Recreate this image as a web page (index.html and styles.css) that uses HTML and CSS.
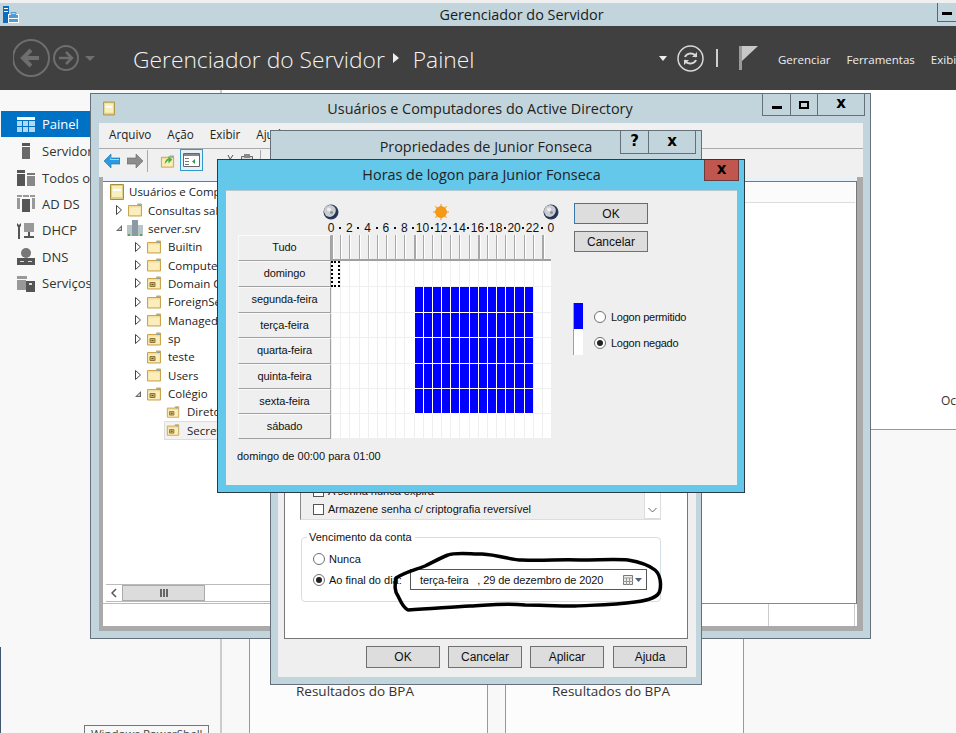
FILE: index.html
```html
<!DOCTYPE html>
<html lang="pt-BR">
<head>
<meta charset="utf-8">
<title>Gerenciador do Servidor</title>
<link rel="stylesheet" href="styles.css">
</head>
<body>
<svg class="defs" width="0" height="0" aria-hidden="true">
  <symbol id="folder" viewBox="0 0 16 16">
    <path d="M1.500 3.500h9v-1.500h4v12h-13z" fill="#f4dc9c" stroke="#c9a552"/>
    <path d="M2.500 5.500h11v7.500h-11z" fill="#fbeebd"/>
    <path d="M11 2.500h3v1.500h-3z" fill="#6aa3d8"/>
  </symbol>
  <symbol id="ou" viewBox="0 0 16 16">
    <path d="M1.500 3.500h9v-1.500h4v12h-13z" fill="#f4dc9c" stroke="#c9a552"/>
    <path d="M2.500 5.500h11v7.500h-11z" fill="#fbeebd"/>
    <path d="M11 2.500h3v1.500h-3z" fill="#6aa3d8"/>
    <path d="M4 7.500h5v4h-5z" fill="#cdb36b" stroke="#8a7436"/>
    <path d="M5.500 9h2v1h-2z" fill="#5a4a20"/>
  </symbol>
  <symbol id="book" viewBox="0 0 14 16">
    <path d="M.5.500h13v15h-13z" fill="#e2d089" stroke="#a98d3b"/>
    <path d="M2 2h10v11h-10z" fill="#f7efc0"/>
    <path d="M3 5h8v2h-8z" fill="#fff"/>
  </symbol>
  <symbol id="moon" viewBox="0 0 16 16">
    <circle cx="8" cy="8" r="7.500" fill="#2b3a55"/>
    <circle cx="7" cy="7" r="6" fill="#c9ccd0"/>
    <path d="M12.500 4a7 7 0 0 1-8.500 9a7 7 0 0 0 10-3z" fill="#1f3263"/>
    <circle cx="6" cy="5.500" r="2" fill="#eef0f2"/>
    <circle cx="8.500" cy="8.500" r="1.500" fill="#8f9398"/>
  </symbol>
  <symbol id="expand" viewBox="0 0 8 10">
    <path d="M1.500 .5l5 4.500l-5 4.500z" fill="#fff" stroke="#444"/>
  </symbol>
  <symbol id="open" viewBox="0 0 8 8">
    <path d="M7 1v6h-6z" fill="#666"/><path d="M5.800 3.500v2.300h-2.300z" fill="#fff"/>
  </symbol>
</svg>

<div class="desktop">
  <div class="topstrip"></div>
  <div class="sm-title">
    <svg class="app-icon" width="16" height="17" viewBox="0 0 16 17">
      <path d="M0 0h6v17h-6z" fill="#0f6cbd"/>
      <path d="M1 2h4v1h-4zM1 5h4v1h-4z" fill="#fff"/>
      <path d="M5 8h11v9h-11z" fill="#fff"/>
      <path d="M6 9h9v7h-9z" fill="#4f9bd6"/>
      <path d="M8 6.500h5v2h-5z" fill="none" stroke="#4f9bd6"/>
      <path d="M6 12h9v1h-9z" fill="#fff"/>
    </svg>
    <span class="sm-title-text">Gerenciador do Servidor</span>
    <span class="sm-min"></span>
  </div>
  <header class="sm-head">
    <svg class="nav" width="86" height="40" viewBox="0 0 86 40">
      <g fill="none" stroke="#6e6e6e">
        <circle cx="18" cy="20" r="18" stroke-width="2"/>
        <circle cx="53" cy="20" r="12" stroke-width="2"/>
        <path d="M26 20h-15M18 12l-8 8l8 8" stroke-width="4"/>
        <path d="M46 20h13M53 14l6 6l-6 6" stroke-width="2.500"/>
      </g>
      <path d="M72 18h10l-5 5z" fill="#6e6e6e"/>
    </svg>
    <div class="crumb">
      <span>Gerenciador do Servidor</span>
      <svg class="crumb-sep" width="6" height="10" viewBox="0 0 6 10"><path d="M0 0l6 5l-6 5z" fill="#eee"/></svg>
      <span>Painel</span>
    </div>
    <div class="tools">
      <svg width="8" height="5" viewBox="0 0 8 5"><path d="M0 0h8l-4 5z" fill="#eee"/></svg>
      <svg class="refresh" width="27" height="27" viewBox="0 0 27 27" fill="none" stroke="#d8d8d8">
        <circle cx="13.500" cy="13.500" r="12.500" stroke-width="1.500"/>
        <path d="M8 12a6 5 0 0 1 10-2l1.500 2M19 15a6 5 0 0 1-10 2l-1.500-2" stroke-width="2"/>
        <path d="M20 7v5h-5zM7 20v-5h5z" fill="#d8d8d8" stroke="none"/>
      </svg>
      <span class="tools-sep"></span>
      <svg class="flag" width="19" height="24" viewBox="0 0 19 24"><path d="M0 0h3v24h-3z" fill="#9a9a9a"/><path d="M3 0h16l-16 15z" fill="#c8c8c8"/></svg>
    </div>
    <nav class="sm-menu"><span>Gerenciar</span><span>Ferramentas</span><span>Exibir</span><span>Ajuda</span></nav>
  </header>

  <main class="sm-main">
    <aside class="sidebar">
      <div class="side-item active">
        <svg class="side-icon" width="18" height="15" viewBox="0 0 18 15"><path d="M0 0h18v3h-18z" fill="#fff"/><path d="M0 4h5v5h-5zM6 4h5v5h-5zM12 4h6v5h-6zM0 10h5v5h-5zM6 10h5v5h-5zM12 10h6v5h-6z" fill="#b5d6ef"/></svg>
        <span>Painel</span>
      </div>
      <div class="side-item">
        <svg class="side-icon" width="18" height="16" viewBox="0 0 18 16"><path d="M5 0h8v3h-8z" fill="#555"/><path d="M5 4h8v12h-8z" fill="#6a6a6a"/></svg>
        <span>Servidor Local</span>
      </div>
      <div class="side-item">
        <svg class="side-icon" width="18" height="16" viewBox="0 0 18 16"><path d="M0 0h8v3h-8zM0 4h8v12h-8z" fill="#555"/><path d="M10 3h8v2h-8z" fill="#777"/><path d="M10 6h8v10h-8z" fill="#888"/></svg>
        <span>Todos os Servidores</span>
      </div>
      <div class="side-item">
        <svg class="side-icon" width="18" height="17" viewBox="0 0 18 17"><path d="M0 0h5v2h-5zM0 3h3v11h-3zM13 0h5v2h-5zM15 3h3v11h-3zM6 0h6v2h-6z" fill="#999"/><path d="M5 4h8v13h-8z" fill="#555"/></svg>
        <span>AD DS</span>
      </div>
      <div class="side-item">
        <svg class="side-icon" width="18" height="17" viewBox="0 0 18 17"><path d="M0 1l2 2l2-2v3l-1 1v12h-2v-12l-1-1z" fill="#555"/><path d="M7 1h10v9h-10z" fill="#999"/><path d="M11 10h2v4h4v2h-10v-2h4z" fill="#555"/></svg>
        <span>DHCP</span>
      </div>
      <div class="side-item">
        <svg class="side-icon" width="18" height="17" viewBox="0 0 18 17"><circle cx="9" cy="5" r="5" fill="#777"/><path d="M0 10h18v7h-18z" fill="#555"/><path d="M3 13h4v1h-4zM11 13h4v1h-4z" fill="#ddd"/></svg>
        <span>DNS</span>
      </div>
      <div class="side-item">
        <svg class="side-icon" width="18" height="17" viewBox="0 0 18 17"><path d="M0 1h10v3h-10z" fill="#999"/><path d="M0 5h9v10h-9z" fill="#999"/><path d="M9 6h9v11h-9z" fill="#555"/><path d="M12 8h3v2h-3z" fill="#ddd"/></svg>
        <span>Serviços de Arquivo</span>
      </div>
      <div class="tooltip">Windows PowerShell</div>
    </aside>
    <section class="content">
      <div class="content-top"><span class="oc">Ocultar</span></div>
      <div class="tiles">
        <div class="tile"><span>Resultados do BPA</span></div>
        <div class="tile"><span>Resultados do BPA</span></div>
      </div>
    </section>
  </main>

  <!-- Usuários e Computadores do Active Directory -->
  <div class="win ad">
    <div class="win-title">
      <svg class="win-icon" width="12" height="15"><use href="#book"/></svg>
      <span>Usuários e Computadores do Active Directory</span>
      <div class="caps">
        <span class="cap cap-min"><i class="glyph-min"></i></span>
        <span class="cap cap-max"><i class="glyph-max"></i></span>
        <span class="cap cap-x">x</span>
      </div>
    </div>
    <div class="ad-client">
      <div class="ad-menu"><span>Arquivo</span><span>Ação</span><span>Exibir</span><span>Ajuda</span></div>
      <div class="ad-toolbar">
        <svg class="tb" width="16" height="14" viewBox="0 0 16 14"><path d="M7 0v4h9v6h-9v4l-7-7z" fill="#2a9be0" stroke="#146ea8" stroke-width=".6"/><path d="M7 2v3h8v1h-9z" fill="#9cdcff"/></svg>
        <svg class="tb" width="16" height="14" viewBox="0 0 16 14"><path d="M9 0v4h-9v6h9v4l7-7z" fill="#8c8c8c" stroke="#666" stroke-width=".6"/></svg>
        <span class="tb-sep"></span>
        <svg class="tb tb-up" width="15" height="15" viewBox="0 0 16 16"><use href="#folder"/><path d="M5 11c0-4 2-6 4-6v-3l4 4l-4 4v-3c-1 0-2 2-4 4z" fill="#4fae3a"/></svg>
        <span class="tb-active">
          <svg width="17" height="14" viewBox="0 0 17 14"><path d="M.5.500h16v13h-16z" fill="#fff" stroke="#666"/><path d="M1 1h15v2h-15z" fill="#888"/><path d="M2 5h4v1h-4zM2 8h4v1h-4zM2 11h4v1h-4z" fill="#777"/><path d="M12 6v5l-3-2.500z" fill="#2f9e4f"/></svg>
        </span>
        <svg class="tb tb-cut" width="15" height="15" viewBox="0 0 15 15" fill="none" stroke="#555"><path d="M12 1l-6 9M7 1l3 6"/><circle cx="4" cy="12" r="2"/></svg>
        <svg class="tb tb-paste" width="12" height="15" viewBox="0 0 12 15"><path d="M.5 2.500h11v12h-11z" fill="#ddd" stroke="#666"/><path d="M3 0h6v4h-6z" fill="#888"/></svg>
        <span class="tb-sep tb-sep2"></span>
        <svg class="tb" width="10" height="12" viewBox="0 0 10 12"><circle cx="5" cy="6" r="4.500" fill="#d33"/></svg>
      </div>
      <div class="panes">
        <div class="split">
          <div class="tree-pane">
            <ul class="tree">
              <li class="root"><svg class="node" width="14" height="16"><use href="#book"/></svg><span>Usuários e Computadores do AD</span></li>
              <li class="d1"><svg class="exp" width="8" height="10"><use href="#expand"/></svg><svg class="node" width="16" height="16"><use href="#folder"/></svg><span>Consultas salvas</span></li>
              <li class="d1"><svg class="exp" width="8" height="8"><use href="#open"/></svg><svg class="node" width="16" height="16" viewBox="0 0 16 16"><path d="M5 0h6v16h-6z" fill="#8b9aa0"/><path d="M0 5h5v11h-5zM11 5h5v11h-5z" fill="#b8c4c8"/><path d="M1 14h2v2h-2zM13 14h2v2h-2z" fill="#3eb33e"/></svg><span>server.srv</span></li>
              <li class="d2"><svg class="exp" width="8" height="10"><use href="#expand"/></svg><svg class="node" width="16" height="16"><use href="#folder"/></svg><span>Builtin</span></li>
              <li class="d2"><svg class="exp" width="8" height="10"><use href="#expand"/></svg><svg class="node" width="16" height="16"><use href="#folder"/></svg><span>Computers</span></li>
              <li class="d2"><svg class="exp" width="8" height="10"><use href="#expand"/></svg><svg class="node" width="16" height="16"><use href="#ou"/></svg><span>Domain Controllers</span></li>
              <li class="d2"><svg class="exp" width="8" height="10"><use href="#expand"/></svg><svg class="node" width="16" height="16"><use href="#folder"/></svg><span>ForeignSecurityPrincipals</span></li>
              <li class="d2"><svg class="exp" width="8" height="10"><use href="#expand"/></svg><svg class="node" width="16" height="16"><use href="#folder"/></svg><span>Managed Service Accounts</span></li>
              <li class="d2"><svg class="exp" width="8" height="10"><use href="#expand"/></svg><svg class="node" width="16" height="16"><use href="#ou"/></svg><span>sp</span></li>
              <li class="d2 noexp"><svg class="node" width="16" height="16"><use href="#ou"/></svg><span>teste</span></li>
              <li class="d2"><svg class="exp" width="8" height="10"><use href="#expand"/></svg><svg class="node" width="16" height="16"><use href="#folder"/></svg><span>Users</span></li>
              <li class="d2"><svg class="exp" width="8" height="8"><use href="#open"/></svg><svg class="node" width="16" height="16"><use href="#ou"/></svg><span>Colégio</span></li>
              <li class="d3"><svg class="node" width="16" height="16"><use href="#ou"/></svg><span>Diretoria</span></li>
              <li class="d3 sel"><svg class="node" width="16" height="16"><use href="#ou"/></svg><span>Secretaria</span></li>
            </ul>
            <div class="hscroll">
              <span class="hs-arrow"><svg width="6" height="10" viewBox="0 0 6 10" fill="none" stroke="#555" stroke-width="1.500"><path d="M5 1l-4 4l4 4"/></svg></span>
              <span class="hs-thumb"><i></i><i></i><i></i></span>
            </div>
          </div>
          <div class="list-pane"><div class="list-head"></div></div>
        </div>
        <div class="ad-status"><span class="st-a"></span><span class="st-b"></span></div>
      </div>
    </div>
  </div>

  <!-- Propriedades -->
  <div class="win prop">
    <div class="win-title prop-title">
      <span>Propriedades de Junior Fonseca</span>
      <div class="caps">
        <span class="cap cap-help">?</span>
        <span class="cap cap-x2">x</span>
      </div>
    </div>
    <div class="prop-body">
      <div class="prop-pane">
        <div class="listbox">
          <div class="lb-rows">
            <label class="chk-row"><i class="chk"></i>A senha nunca expira</label>
            <label class="chk-row"><i class="chk"></i>Armazene senha c/ criptografia reversível</label>
          </div>
          <div class="lb-scroll"><svg class="lb-down" width="9" height="6" viewBox="0 0 9 6" fill="none" stroke="#666"><path d="M.5 1l4 4l4-4"/></svg></div>
        </div>
        <fieldset class="expiry">
          <legend>Vencimento da conta</legend>
          <div class="exp-row"><i class="radio"></i><span>Nunca</span></div>
          <div class="exp-row"><i class="radio on"></i><span class="exp-label">Ao final do dia:</span>
            <div class="datebox"><span>terça-feira &nbsp; , 29 de dezembro de 2020</span>
              <svg class="cal" width="10" height="10" viewBox="0 0 10 10"><path d="M.5.500h9v9h-9z" fill="#eee" stroke="#777"/><path d="M0 3h10M3.500 3v7M6.500 3v7M0 6.500h10" stroke="#999"/></svg>
              <svg width="7" height="4" viewBox="0 0 7 4"><path d="M0 0h7l-3.500 4z" fill="#4f6285"/></svg>
            </div>
          </div>
        </fieldset>
      </div>
      <div class="prop-btns">
        <span class="btn">OK</span><span class="btn">Cancelar</span><span class="btn">Aplicar</span><span class="btn">Ajuda</span>
      </div>
    </div>
  </div>

  <!-- Horas de logon -->
  <div class="win hours">
    <div class="hours-title">
      <span>Horas de logon para Junior Fonseca</span>
      <span class="hours-x">x</span>
    </div>
    <div class="hours-body">
      <div class="sched-col">
        <div class="sky">
          <svg width="16" height="16"><use href="#moon"/></svg>
          <svg width="16" height="16" viewBox="0 0 16 16"><g stroke="#f7b45a" stroke-width="1.500"><path d="M8 0v16M0 8h16M2.300 2.300l11.400 11.400M13.700 2.300l-11.400 11.400"/></g><circle cx="8" cy="8" r="5.500" fill="#f59a12" stroke="#e07f00" stroke-width=".5"/></svg>
          <svg width="16" height="16"><use href="#moon"/></svg>
        </div>
        <div class="ticks">
          <span>0</span><b></b><span>2</span><b></b><span>4</span><b></b><span>6</span><b></b><span>8</span><b></b><span>10</span><b></b><span>12</span><b></b><span>14</span><b></b><span>16</span><b></b><span>18</span><b></b><span>20</span><b></b><span>22</span><b></b><span>0</span>
        </div>
        <div class="sched">
          <span class="day">Tudo</span>
          <i class="h hv"></i><i class="h"></i><i class="h"></i><i class="h"></i><i class="h"></i><i class="h"></i><i class="h"></i><i class="h"></i><i class="h"></i><i class="h hv"></i><i class="h"></i><i class="h"></i><i class="h"></i><i class="h"></i><i class="h"></i><i class="h"></i><i class="h hv"></i><i class="h"></i><i class="h"></i><i class="h"></i><i class="h"></i><i class="h"></i><i class="h"></i><i class="h hv"></i>
          <span class="day">domingo</span>
          <i class="focus"></i><i></i><i></i><i></i><i></i><i></i><i></i><i></i><i></i><i></i><i></i><i></i><i></i><i></i><i></i><i></i><i></i><i></i><i></i><i></i><i></i><i></i><i></i><i></i>
          <span class="day">segunda-feira</span>
          <i></i><i></i><i></i><i></i><i></i><i></i><i></i><i></i><i></i><i class="on"></i><i class="on"></i><i class="on"></i><i class="on"></i><i class="on"></i><i class="on"></i><i class="on"></i><i class="on"></i><i class="on"></i><i class="on"></i><i class="on"></i><i class="on"></i><i class="on"></i><i></i><i></i>
          <span class="day">terça-feira</span>
          <i></i><i></i><i></i><i></i><i></i><i></i><i></i><i></i><i></i><i class="on"></i><i class="on"></i><i class="on"></i><i class="on"></i><i class="on"></i><i class="on"></i><i class="on"></i><i class="on"></i><i class="on"></i><i class="on"></i><i class="on"></i><i class="on"></i><i class="on"></i><i></i><i></i>
          <span class="day">quarta-feira</span>
          <i></i><i></i><i></i><i></i><i></i><i></i><i></i><i></i><i></i><i class="on"></i><i class="on"></i><i class="on"></i><i class="on"></i><i class="on"></i><i class="on"></i><i class="on"></i><i class="on"></i><i class="on"></i><i class="on"></i><i class="on"></i><i class="on"></i><i class="on"></i><i></i><i></i>
          <span class="day">quinta-feira</span>
          <i></i><i></i><i></i><i></i><i></i><i></i><i></i><i></i><i></i><i class="on"></i><i class="on"></i><i class="on"></i><i class="on"></i><i class="on"></i><i class="on"></i><i class="on"></i><i class="on"></i><i class="on"></i><i class="on"></i><i class="on"></i><i class="on"></i><i class="on"></i><i></i><i></i>
          <span class="day">sexta-feira</span>
          <i></i><i></i><i></i><i></i><i></i><i></i><i></i><i></i><i></i><i class="on"></i><i class="on"></i><i class="on"></i><i class="on"></i><i class="on"></i><i class="on"></i><i class="on"></i><i class="on"></i><i class="on"></i><i class="on"></i><i class="on"></i><i class="on"></i><i class="on"></i><i></i><i></i>
          <span class="day">sábado</span>
          <i></i><i></i><i></i><i></i><i></i><i></i><i></i><i></i><i></i><i></i><i></i><i></i><i></i><i></i><i></i><i></i><i></i><i></i><i></i><i></i><i></i><i></i><i></i><i></i>
        </div>
        <div class="sched-status">domingo de 00:00 para 01:00</div>
      </div>
      <div class="side-col">
        <span class="btn btn-default">OK</span>
        <span class="btn">Cancelar</span>
        <div class="legend">
          <div class="swatches"><i class="sw-on"></i><i class="sw-off"></i></div>
          <div class="legend-opts">
            <div class="opt"><i class="radio"></i><span>Logon permitido</span></div>
            <div class="opt"><i class="radio on"></i><span>Logon negado</span></div>
          </div>
        </div>
      </div>
    </div>
  </div>

  <svg class="scribble" width="956" height="733" viewBox="0 0 956 733" fill="none" stroke="#000" stroke-width="3.500" stroke-linejoin="round">
    <path d="M448 555C455 552 470 554 482 554C500 555 510 560 522 560C545 561 560 559 580 560C600 560 615 559 628 560C640 562 650 566 655 570C661 575 661 585 660 590C659 597 650 600 635 602C615 605 595 605 575 606C555 606 540 605 525 605C505 603 490 605 470 606C450 607 430 609 408 610C403 608 400 600 398 596C394 590 395 585 396 578C405 572 415 570 425 566C435 561 440 558 448 555z"/>
  </svg>
</div>
</body>
</html>
```

FILE: styles.css
```css
* { box-sizing: border-box; }
html, body { margin: 0; padding: 0; }
body { width: 956px; height: 733px; overflow: hidden; font-family: "Open Sans", "Noto Sans", sans-serif; color: #111; }
.defs { position: absolute; }
.desktop { position: relative; width: 956px; height: 733px; overflow: hidden; background: #f8f8f8; display: flex; flex-direction: column; }
.desktop::after { content: ""; position: absolute; left: 0; top: 647px; bottom: 0; width: 1px; background: #3f5770; }

/* Server Manager shell */
.topstrip { height: 3px; background: #f0f0f0; flex: none; }
.sm-title { height: 23px; flex: none; background: #c2d5dc; display: flex; align-items: center; padding-left: 3px; font-size: 14.400px; color: #1a1a1a; }
.app-icon { flex: none; }
.sm-title-text { flex: 1; text-align: center; padding-left: 87px; }
.sm-min { width: 19px; height: 19px; align-self: flex-start; border: 1px solid #5a6670; border-top: 0; border-right: 0; position: relative; }
.sm-min::after { content: ""; position: absolute; left: 4px; top: 9px; width: 10px; height: 3px; background: #000; }
.sm-head { height: 64px; flex: none; background: #404040; display: flex; align-items: center; padding-left: 13px; color: #eee; }
.nav { flex: none; }
.crumb { flex: 0 0 526px; margin-left: 34px; font-size: 22.800px; font-weight: 300; display: flex; align-items: center; white-space: nowrap; color: #f4f4f4; padding-top: 3px; }
.crumb-sep { margin: 0 14px 3px 8px; }
.tools { flex: none; display: flex; align-items: center; width: 119px; }
.refresh { margin-left: 10px; }
.tools-sep { width: 2px; height: 18px; background: #cfcfcf; margin-left: 12px; }
.flag { margin-left: 21px; }
.sm-menu { display: flex; flex: none; gap: 16px; font-size: 11.500px; color: #eee; white-space: nowrap; padding-top: 2px; }
.sm-main { flex: 1; display: flex; min-height: 0; }
.sidebar { flex: 0 0 222px; padding-top: 21px; background: #f8f8f8; border-right: 2px solid #ccc; position: relative; overflow: hidden; }
.side-item { height: 26.400px; display: flex; align-items: center; padding-left: 17px; gap: 7px; font-size: 13px; color: #333; white-space: nowrap; }
.side-item.active { background: #0072c6; color: #fff; margin-left: 1px; padding-left: 16px; height: 26px; margin-bottom: 1px; }
.side-icon { flex: none; }
.tooltip { position: absolute; left: 84px; bottom: -16px; width: 125px; height: 24px; border: 1px solid #777; background: #f8f8f8; font-size: 11.500px; padding-left: 6px; color: #444; }
.content { flex: 1; display: flex; flex-direction: column; min-width: 0; }
.content-top { height: 340px; background: #fff; border-bottom: 1px solid #999; display: flex; justify-content: flex-end; padding-top: 302px; font-size: 12px; overflow: hidden; }
.oc { flex: 0 0 15px; white-space: nowrap; overflow: hidden; color: #333; }
.tiles { flex: 1; display: flex; padding-left: 27px; gap: 17px; }
.tile { width: 239px; background: #fcfcfc; border-left: 1px solid #999; border-right: 1px solid #999; padding: 252px 0 0 46px; font-size: 13.500px; color: #333; white-space: nowrap; }

/* Windows */
.win { position: absolute; border: 1px solid #66707a; background: #c2d5dc; }
.win-title { position: relative; display: flex; align-items: center; justify-content: center; font-size: 14.400px; color: #222; }
.win-icon { position: absolute; left: 4px; top: 7px; }
.caps { position: absolute; top: 0; display: flex; border: 1px solid #66707a; border-top: 0; }
.cap { display: flex; align-items: center; justify-content: center; border-left: 1px solid #66707a; font: bold 15px "DejaVu Sans", sans-serif; color: #000; padding-bottom: 3px; }
.cap:first-child { border-left: 0; }

.ad { left: 90px; top: 93px; width: 781px; height: 546px; padding: 0 7px 7px 8px; display: flex; flex-direction: column; }
.ad > .win-title { height: 29px; flex: none; padding-right: 2px; }
.ad .caps { left: 663px; height: 22px; }
.cap-min { width: 27px; }
.cap-max { width: 27px; }
.cap-x { width: 47px; }
.glyph-min { width: 10px; height: 3px; background: #000; margin-top: 8px; }
.glyph-max { width: 10px; height: 8px; border: 2px solid #000; margin-top: 3px; }
.ad-client { flex: 1; display: flex; flex-direction: column; min-height: 0; background: #f0f0f0; }
.ad-menu { height: 26px; flex: none; display: flex; gap: 16px; padding: 3px 0 0 10px; font-size: 11.700px; border-bottom: 1px solid #aaa; color: #222; }
.ad-toolbar { height: 28px; flex: none; display: flex; align-items: flex-start; padding-left: 5px; }
.tb { flex: none; margin-top: 5px; margin-right: 7px; }
.tb-sep { width: 1px; height: 22px; background: #aaa; margin: 1px 12px 0 -3px; flex: none; }
.tb-sep2 { margin: 1px 10px 0 0; }
.tb-up { margin-right: 5px; }
.tb-active { width: 23px; height: 22px; border: 1px solid #3399cc; background: #e5f1f9; display: flex; align-items: center; justify-content: center; flex: none; }
.tb-cut { margin-left: 18px; margin-right: 5px; }
.tb-paste { margin-right: 7px; }
.panes { flex: 1; min-height: 0; display: flex; flex-direction: column; background: #e8f0fc; padding-top: 4px; border-left: 4px solid #aaa; border-right: 6px solid #aaa; border-bottom: 5px solid #aaa; }
.split { flex: 1; min-height: 0; display: flex; }
.tree-pane { flex: 0 0 170px; background: #fff; display: flex; flex-direction: column; border-top: 1px solid #777; border-bottom: 1px solid #bbb; overflow: hidden; }
.tree { flex: 1; list-style: none; margin: 0; padding: .5px 0 0; font-size: 11.500px; color: #222; }
.tree li { height: 18.360px; display: flex; align-items: center; white-space: nowrap; }
.tree .exp { flex: none; width: 8px; margin-right: 4px; }
.tree .node { flex: none; margin-right: 5px; }
.tree .root { padding-left: 7px; }
.tree .root .node { margin-right: 5px; }
.tree .d1 { padding-left: 12px; }
.tree .d2 { padding-left: 31px; }
.tree .d2 .node { margin-right: 6px; }
.tree .d2.noexp { padding-left: 43px; }
.tree .d3 { padding-left: 63px; }
.tree .d3 .node { width: 14px; margin-right: 7px; }
.tree .d3.sel { margin-left: 61px; padding-left: 1px; background: #f2f2f2; border: 1px solid #ddd; }
.hscroll { height: 18px; flex: none; margin: 0 0 1px 3px; border-top: 1px solid #bbb; border-bottom: 1px solid #bbb; display: flex; }
.hs-arrow { width: 16px; display: flex; align-items: center; justify-content: center; flex: none; }
.hs-thumb { width: 83px; background: #dcdcdc; border: 1px solid #aaa; display: flex; align-items: center; justify-content: center; gap: 1px; flex: none; }
.hs-thumb i { width: 2px; height: 8px; background: #666; }
.list-pane { flex: 1; background: #fff; border-top: 1px solid #777; border-right: 1px solid #777; border-bottom: 1px solid #888; }
.list-head { height: 21px; background: #fbfbfb; border-bottom: 1px solid #ddd; margin-right: 1px; }
.ad-status { height: 22px; flex: none; background: #fff; position: relative; display: flex; justify-content: flex-end; }
.st-a { width: 86px; border-left: 1px solid #ccc; }
.st-b { width: 3px; border-left: 1px solid #ccc; }

.prop { left: 270px; top: 130px; width: 432px; height: 555px; display: flex; flex-direction: column; }
.prop-title { height: 29px; flex: none; padding-top: 1px; }
.prop .caps { left: 349px; height: 23px; }
.cap-help { width: 27px; }
.cap-x2 { width: 47px; }
.prop-body { flex: 1; min-height: 0; margin: 0 5px 7px 7px; background: #efefef; display: flex; flex-direction: column; padding: 0 8px 0 6px; }
.prop-pane { flex: 1; min-height: 0; background: #fff; border: 1px solid #777; display: flex; flex-direction: column; justify-content: flex-end; padding: 0 0 36px 15px; }
.listbox { width: 361px; height: 61px; display: flex; background: #efefef; border-left: 1px solid #888; border-bottom: 1px solid #ddd; font: 11px "Liberation Sans", sans-serif; }
.lb-rows { flex: 1; display: flex; flex-direction: column; justify-content: flex-end; padding: 0 0 1px 12px; }
.chk-row { height: 18px; display: flex; align-items: center; gap: 4px; }
.chk { width: 11px; height: 11px; border: 1px solid #555; background: #fff; flex: none; }
.lb-scroll { width: 17px; background: #fff; border: 1px solid #ddd; display: flex; align-items: flex-end; justify-content: center; padding-bottom: 5px; }
.expiry { margin: 11px 0 0 1px; padding: 5px 0 0 11px; width: 360px; height: 71px; border: 1px solid #d3dfe6; border-radius: 4px; font: 11px "Liberation Sans", sans-serif; min-width: 0; }
.expiry legend { padding: 0 3px 0 2px; margin-left: -6px; }
.exp-row { height: 21px; display: flex; align-items: center; gap: 4px; }
.exp-row .exp-label { width: 77px; flex: none; white-space: nowrap; }
.datebox { width: 237px; height: 21px; background: #fff; border: 1px solid #555; display: flex; align-items: center; padding-left: 9px; font-size: 11px; white-space: nowrap; gap: 2px; }
.datebox span { width: 201px; flex: none; letter-spacing: -.1px; }
.radio { width: 12px; height: 12px; border-radius: 50%; border: 1px solid #707070; background: #fff; flex: none; position: relative; }
.radio.on::after { content: ""; position: absolute; left: 2px; top: 2px; width: 6px; height: 6px; border-radius: 50%; background: #222; }
.prop-btns { height: 38px; flex: none; display: flex; justify-content: flex-end; align-items: flex-start; padding: 7px 1px 0 0; gap: 8px; }
.prop-btns .btn:last-child { margin-left: 1px; }
.btn { width: 74px; height: 22px; background: #ddd; border: 1px solid #707070; display: flex; align-items: center; justify-content: center; font: 12px "Liberation Sans", sans-serif; color: #111; }

.hours { left: 217px; top: 159px; width: 528px; height: 334px; background: #64c8ea; border-color: #2b3a45; padding: 0 7px 7px 8px; display: flex; flex-direction: column; }
.hours-title { height: 30px; flex: none; position: relative; display: flex; align-items: center; justify-content: center; font-size: 14.400px; color: #222; padding-bottom: 1px; }
.hours-x { position: absolute; left: 478px; top: 0; width: 35px; height: 21px; background: #c0574f; border: 1px solid #6b3a3a; border-top: 0; display: flex; align-items: center; justify-content: center; font: bold 15px "DejaVu Sans", sans-serif; color: #000; padding-bottom: 3px; }
.hours-body { flex: 1; min-height: 0; background: #efefef; border-top: 1px solid #b8c8d0; display: flex; font: 12px "Liberation Sans", sans-serif; }
.sched-col { flex: 0 0 313px; min-width: 0; margin-left: 12px; }
.sky { width: 236px; height: 16px; margin: 13px 0 0 85px; display: flex; justify-content: space-between; }
.ticks { height: 14px; margin: 1px 0 0 88.400px; display: grid; grid-template-columns: repeat(25, 9.167px); width: 229.200px; align-items: center; }
.ticks span { display: flex; justify-content: center; white-space: nowrap; }
.ticks b { width: 2px; height: 2px; background: #111; justify-self: center; }
.sched { height: 204px; width: 313px; display: grid; grid-template-columns: 93px repeat(24, minmax(0, 1fr)); grid-template-rows: 26px 26px 26px 25px 26px 25px 25px 25px; }
.day { background: #efefef; border-top: 1px solid #fafafa; border-left: 1px solid #fafafa; border-right: 1px solid #a0a0a0; border-bottom: 1px solid #a0a0a0; display: flex; align-items: center; justify-content: center; font-size: 11px; letter-spacing: -.1px; padding-bottom: 2px; }
.sched i { background: #fff; border-left: 1px solid #efefef; border-bottom: 1px solid #efefef; min-width: 0; }
.sched i.h { background: #efefef; border-left: 1px solid #a8a8a8; border-bottom: 2px solid #a0a0a0; box-shadow: inset 1px 0 0 #fff; }
.sched i.hv { border-left-width: 2px; }
.sched i.on { background: #0000ff; border-left: 1px solid #fff; border-bottom: 1px solid #fff; }
.sched i.focus { border: 2px dotted #000; }
.sched-status { margin: 11px 0 0 -1px; font-size: 11px; }
.side-col { flex: none; margin-left: 23px; padding-top: 12px; display: flex; flex-direction: column; gap: 7px; }
.side-col .btn { height: 21px; }
.btn-default { border-color: #3b78a8; }
.legend { display: flex; margin: 44px 0 0 -1px; }
.swatches { display: flex; flex-direction: column; width: 10px; flex: none; }
.sw-on { height: 26px; background: #0000ff; border-left: 1px solid #a0a0a0; }
.sw-off { height: 26px; background: #fff; border-left: 1px solid #a0a0a0; }
.legend-opts { margin-left: 11px; display: flex; flex-direction: column; }
.opt { height: 26px; display: flex; align-items: center; gap: 5px; font-size: 11px; letter-spacing: -.25px; white-space: nowrap; padding-top: 1px; }

.scribble { position: absolute; left: 0; top: 0; pointer-events: none; }
```
